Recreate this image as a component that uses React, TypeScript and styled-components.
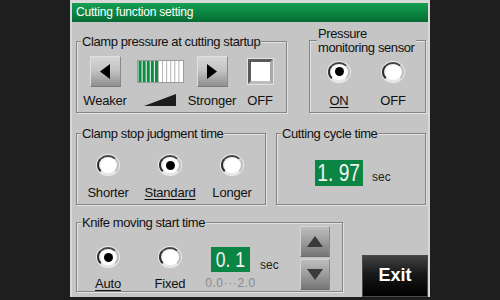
import React from 'react';
import styled, { createGlobalStyle } from 'styled-components';

const GlobalStyle = createGlobalStyle`
  html, body { margin: 0; padding: 0; background: #1e1e1e; }
  body { font-family: "Liberation Sans", Arial, sans-serif; color: #111; }
`;

const PANEL = '#c5c5c5';

const Screen = styled.div`
  width: 500px;
  height: 300px;
  background: #1e1e1e;
  display: flex;
  justify-content: center;
`;

const Panel = styled.div`
  box-sizing: border-box;
  width: 360px;
  height: 297px;
  background: ${PANEL};
  border: 2px solid #d9d9d9;
  border-top-width: 3px;
  border-bottom: none;
  display: flex;
  flex-direction: column;
`;

const TitleBar = styled.div`
  flex: none;
  height: 19px;
  line-height: 19px;
  padding-left: 4px;
  background: linear-gradient(#15a052, #0a8441 55%, #066a33);
  color: #fff;
  font-size: 12px;
  letter-spacing: -0.2px;
`;

const Body = styled.div`
  display: flex;
  flex-direction: column;
  padding-left: 4px;
`;

const Row = styled.div<{ $top: number; $gap: number; $align?: string }>`
  display: flex;
  align-items: ${(p) => p.$align ?? 'flex-start'};
  gap: ${(p) => p.$gap}px;
  margin-top: ${(p) => p.$top}px;
`;

const Group = styled.fieldset<{ $w: number; $pt: number; $pb: number; $mb?: number }>`
  box-sizing: border-box;
  width: ${(p) => p.$w}px;
  min-width: 0;
  margin: 0 0 ${(p) => p.$mb ?? 0}px;
  padding: ${(p) => p.$pt}px 0 ${(p) => p.$pb}px;
  border: 1px solid #858585;
  box-shadow: 1px 1px 0 #e2e2e2, inset 1px 1px 0 #e2e2e2;
`;

const Legend = styled.legend<{ $two?: boolean }>`
  margin-left: ${(p) => (p.$two ? 7 : 4)}px;
  padding: 0 1px;
  font-size: 13px;
  line-height: ${(p) => (p.$two ? 14 : 15)}px;
  letter-spacing: -0.4px;
  background: ${PANEL};
  color: #111;
`;

const Cells = styled.div<{ $pl?: number; $gap?: number }>`
  display: flex;
  align-items: flex-start;
  padding-left: ${(p) => p.$pl ?? 0}px;
  gap: ${(p) => p.$gap ?? 0}px;
`;

const Cell = styled.div<{ $w: number; $mt?: number; $ml?: number }>`
  flex: none;
  width: ${(p) => p.$w}px;
  margin-top: ${(p) => p.$mt ?? 0}px;
  margin-left: ${(p) => p.$ml ?? 0}px;
  display: flex;
  flex-direction: column;
  align-items: center;
`;

const Control = styled.div<{ $h: number }>`
  height: ${(p) => p.$h}px;
  display: flex;
  align-items: center;
  justify-content: center;
`;

const Caption = styled.div<{ $gap: number; $on?: boolean; $muted?: boolean }>`
  margin-top: ${(p) => p.$gap}px;
  height: 15px;
  line-height: 15px;
  font-size: ${(p) => (p.$muted ? 12 : 13)}px;
  letter-spacing: ${(p) => (p.$muted ? 0.6 : -0.2)}px;
  white-space: nowrap;
  color: ${(p) => (p.$muted ? '#8a8a8a' : '#111')};
  text-decoration: ${(p) => (p.$on ? 'underline' : 'none')};
  text-underline-offset: 2px;
  display: flex;
  align-items: center;
`;

const ArrowButton = styled.div`
  box-sizing: border-box;
  width: 31px;
  height: 31px;
  display: flex;
  align-items: center;
  justify-content: center;
  border: 1px solid;
  border-color: #e0e0e0 #8a8a8a #7a7a7a #e0e0e0;
  background: linear-gradient(#d6d6d6, #c4c4c4 45%, #8f8f8f);
`;

const StepButton = styled(ArrowButton)`
  width: 30px;
  background: linear-gradient(#bdbdbd, #9c9c9c 50%, #767676);
  border-color: #d4d4d4 #8a8a8a #6a6a6a #d4d4d4;
`;

const Stepper = styled.div`
  flex: none;
  margin-left: 21px;
  margin-top: -3.5px;
  display: flex;
  flex-direction: column;
  gap: 2px;
`;

const OffBox = styled.div`
  box-sizing: border-box;
  width: 25px;
  height: 25px;
  background: #fff;
  border: 3px solid;
  border-color: #5a5a5a #a8a8a8 #bcbcbc #5a5a5a;
  box-shadow: 0 0 0 1px #e4e4e4;
`;

const Radio = styled.span<{ $on?: boolean }>`
  box-sizing: border-box;
  width: 22px;
  height: 20px;
  border-radius: 50%;
  border: 2px solid;
  border-color: #444 #c0c0c0 #e8e8e8 #2e2e2e;
  background: radial-gradient(circle at 55% 55%, #fff 55%, #e2e2e2 80%);
  box-shadow: 0 0 0 1px #ececec;
  display: flex;
  align-items: center;
  justify-content: center;
  &::after {
    content: '';
    display: ${(p) => (p.$on ? 'block' : 'none')};
    width: 9px;
    height: 9px;
    border-radius: 50%;
    background: #000;
  }
`;

const Readout = styled.div<{ $w: number; $h: number; $fs: number }>`
  flex: none;
  width: ${(p) => p.$w}px;
  height: ${(p) => p.$h}px;
  background: #0b8543;
  color: #f2f2f2;
  font-size: ${(p) => p.$fs}px;
  display: flex;
  align-items: center;
  justify-content: center;
  white-space: pre;
  overflow: hidden;
`;

const Digits = styled.span`
  display: inline-block;
  transform: scaleX(0.8);
`;

const ReadoutRow = styled.div`
  display: flex;
  align-items: flex-start;
  padding-left: 38px;
`;

const Unit = styled.span<{ $ml: number; $mt: number }>`
  flex: none;
  margin-left: ${(p) => p.$ml}px;
  margin-top: ${(p) => p.$mt}px;
  font-size: 12px;
  line-height: 14px;
  color: #222;
`;

const ExitButton = styled.button`
  flex: none;
  align-self: flex-end;
  width: 66px;
  height: 42px;
  padding: 0;
  border: 1px solid #4a4a4a;
  background: linear-gradient(#424242, #181818 45%, #000);
  color: #fff;
  font-family: inherit;
  font-size: 18px;
  font-weight: bold;
`;

const Tri = ({ dir, w, h, color }: { dir: 'l' | 'r' | 'u' | 'd'; w: number; h: number; color: string }) => {
  const pts = {
    l: `0,${h / 2} ${w},0 ${w},${h}`,
    r: `0,0 ${w},${h / 2} 0,${h}`,
    u: `${w / 2},0 ${w},${h} 0,${h}`,
    d: `0,0 ${w},0 ${w / 2},${h}`,
  }[dir];
  return (
    <svg width={w} height={h} viewBox={`0 0 ${w} ${h}`}>
      <polygon points={pts} fill={color} />
    </svg>
  );
};

const LevelBar = ({ level, total }: { level: number; total: number }) => {
  const cw = 45 / total;
  return (
    <svg width={47} height={23} viewBox="0 0 47 23">
      <rect x={0.5} y={0.5} width={46} height={22} fill="#fff" stroke="#9a9a9a" />
      {Array.from({ length: total }, (_, i) =>
        i < level ? (
          <rect key={i} x={1 + i * cw + 0.5} y={1} width={cw - 1} height={21} fill="#0e8c46" />
        ) : (
          <line key={i} x1={1 + i * cw} y1={1} x2={1 + i * cw} y2={22} stroke="#9f9f9f" strokeWidth={0.8} />
        ),
      )}
    </svg>
  );
};

const Ramp = () => (
  <svg width={32} height={12} viewBox="0 0 32 12">
    <polygon points="0,12 32,0 32,12" fill="#1c1c1c" />
  </svg>
);

export default function App() {
  return (
    <Screen>
      <GlobalStyle />
      <Panel>
        <TitleBar>Cutting function setting</TitleBar>
        <Body>
          <Row $top={4.5} $gap={22} $align="flex-end">
            <Group $w={211} $pt={7.5} $pb={4.5}>
              <Legend>Clamp pressure at cutting startup</Legend>
              <Cells>
                <Cell $w={56}>
                  <Control $h={31}>
                    <ArrowButton>
                      <Tri dir="l" w={10} h={15} color="#000" />
                    </ArrowButton>
                  </Control>
                  <Caption $gap={5.5}>Weaker</Caption>
                </Cell>
                <Cell $w={54}>
                  <Control $h={31}>
                    <LevelBar level={5} total={11} />
                  </Control>
                  <Caption $gap={5.5}>
                    <Ramp />
                  </Caption>
                </Cell>
                <Cell $w={50}>
                  <Control $h={31}>
                    <ArrowButton>
                      <Tri dir="r" w={10} h={15} color="#000" />
                    </ArrowButton>
                  </Control>
                  <Caption $gap={5.5}>Stronger</Caption>
                </Cell>
                <Cell $w={46}>
                  <Control $h={31}>
                    <OffBox />
                  </Control>
                  <Caption $gap={5.5}>OFF</Caption>
                </Cell>
              </Cells>
            </Group>
            <Group $w={117} $pt={1.5} $pb={4.5}>
              <Legend $two>
                Pressure
                <br />
                monitoring sensor
              </Legend>
              <Cells $pl={4} $gap={4}>
                <Cell $w={50}>
                  <Control $h={31}>
                    <Radio $on />
                  </Control>
                  <Caption $gap={5.5} $on>
                    ON
                  </Caption>
                </Cell>
                <Cell $w={50}>
                  <Control $h={31}>
                    <Radio />
                  </Control>
                  <Caption $gap={5.5}>OFF</Caption>
                </Cell>
              </Cells>
            </Group>
          </Row>

          <Row $top={12.5} $gap={10}>
            <Group $w={190} $pt={14.5} $pb={4.5}>
              <Legend>Clamp stop judgment time</Legend>
              <Cells>
                {['Shorter', 'Standard', 'Longer'].map((t) => (
                  <Cell key={t} $w={62}>
                    <Control $h={20}>
                      <Radio $on={t === 'Standard'} />
                    </Control>
                    <Caption $gap={9.5} $on={t === 'Standard'}>
                      {t}
                    </Caption>
                  </Cell>
                ))}
              </Cells>
            </Group>
            <Group $w={150} $pt={19.5} $pb={18}>
              <Legend>Cutting cycle time</Legend>
              <ReadoutRow>
                <Readout $w={48} $h={26} $fs={24}>
                  <Digits>1. 97</Digits>
                </Readout>
                <Unit $ml={9} $mt={10}>
                  sec
                </Unit>
              </ReadoutRow>
            </Group>
          </Row>

          <Row $top={9.5} $gap={19}>
            <Group $w={267} $pt={0} $pb={0} $mb={5}>
              <Legend>Knife moving start time</Legend>
              <Cells>
                {['Auto', 'Fixed'].map((t) => (
                  <Cell key={t} $w={62} $mt={17.5}>
                    <Control $h={20}>
                      <Radio $on={t === 'Auto'} />
                    </Control>
                    <Caption $gap={8.5} $on={t === 'Auto'}>
                      {t}
                    </Caption>
                  </Cell>
                ))}
                <Cell $w={39} $mt={17.5} $ml={10}>
                  <Readout $w={39} $h={25} $fs={22}>
                    <Digits>0. 1</Digits>
                  </Readout>
                  <Caption $gap={3.5} $muted>
                    0.0···2.0
                  </Caption>
                </Cell>
                <Unit $ml={10} $mt={28.5}>
                  sec
                </Unit>
                <Stepper>
                  <StepButton>
                    <Tri dir="u" w={16} h={11} color="#3a3a3a" />
                  </StepButton>
                  <StepButton>
                    <Tri dir="d" w={16} h={11} color="#3a3a3a" />
                  </StepButton>
                </Stepper>
              </Cells>
            </Group>
            <ExitButton>Exit</ExitButton>
          </Row>
        </Body>
      </Panel>
    </Screen>
  );
}
